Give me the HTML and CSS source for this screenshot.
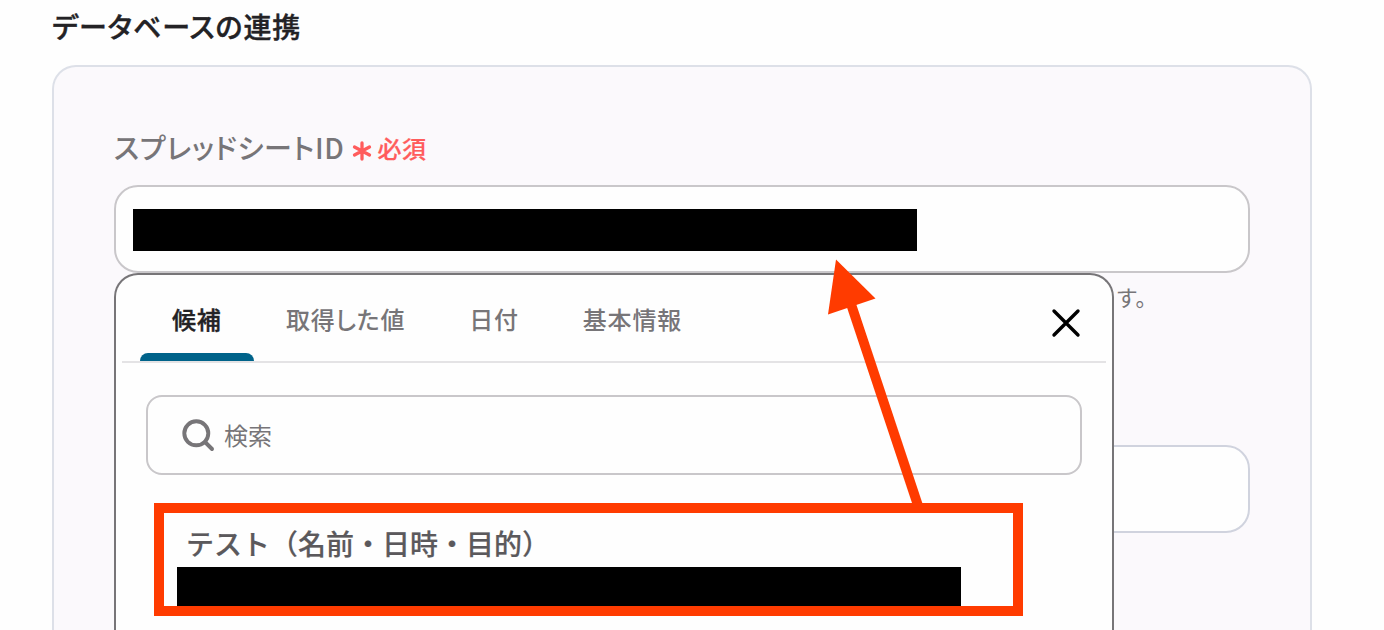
FILE: index.html
```html
<!DOCTYPE html>
<html lang="ja">
<head>
    <meta charset="UTF-8">
    <title>データベースの連携</title>
    <link rel="stylesheet" href="styles.css">
</head>
<body>
    <h1 class="section-title">データベースの連携</h1>

    <div class="panel">
        <div class="field">
            <div class="field-label">
                <span class="label-text">スプレッドシートID</span>
                <span class="required">
                    <svg class="asterisk" viewBox="0 0 20 20">
                        <path d="M10 2v16M2.5 6l15 8M17.5 6l-15 8"/>
                    </svg>
                    <span>必須</span>
                </span>
            </div>

            <div class="input-wrap">
                <div class="input">
                    <div class="masked"></div>
                </div>

                <div class="dropdown">
                    <div class="dropdown-header">
                        <div class="tabs">
                            <div class="tab active">候補</div>
                            <div class="tab">取得した値</div>
                            <div class="tab">日付</div>
                            <div class="tab">基本情報</div>
                        </div>
                        <svg class="close" viewBox="0 0 30 30">
                            <path d="M3 3l24 24M27 3L3 27"/>
                        </svg>
                    </div>

                    <div class="search">
                        <svg class="search-icon" viewBox="0 0 34 34">
                            <circle cx="15.3" cy="15.3" r="12"/>
                            <path d="M24 24l7 7"/>
                        </svg>
                        <span class="placeholder">検索</span>
                    </div>

                    <div class="candidate">
                        <div class="candidate-name">テスト（名前・日時・目的）</div>
                        <div class="candidate-masked"></div>
                    </div>
                </div>
            </div>
            <div class="hint">す。</div>
        </div>

        <div class="input second"></div>
    </div>

    <svg class="arrow" viewBox="0 0 1384 630">
        <path d="M851 304L918.5 507"/>
        <polygon points="836,259.5 875.5,298.5 828,314.5"/>
    </svg>
</body>
</html>
```

FILE: styles.css
```css
* { box-sizing: border-box; }
body {
    margin: 0;
    padding: 0 72px 0 52px;
    height: 630px;
    position: relative;
    background: #fefefe;
    font-family: "Noto Sans CJK JP", sans-serif;
    color: #777578;
}
.section-title {
    margin: 0;
    height: 65px;
    padding-top: 6px;
    font-size: 28px;
    line-height: 40px;
    font-weight: 500;
    font-feature-settings: "palt";
    letter-spacing: 0.9px;
    color: #232225;
    -webkit-text-stroke: 0.4px #232225;
}
.panel {
    height: 565px;
    padding: 60px 60px 0;
    border: 2px solid #dde0e8;
    border-bottom: none;
    border-radius: 24px 24px 0 0;
    background: #fbf9fc;
}
.field { height: 318px; }
.field-label {
    display: flex;
    align-items: center;
    gap: 7px;
    height: 58px;
    padding-bottom: 19px;
}
.label-text {
    font-size: 28px;
    line-height: 40px;
    font-weight: 500;
    font-feature-settings: "palt";
    letter-spacing: 0.75px;
}
.required {
    display: flex;
    align-items: center;
    gap: 6px;
    padding-top: 3px;
    font-size: 24px;
    line-height: 36px;
    font-weight: 500;
    letter-spacing: 0.5px;
    color: #ff5c5c;
    -webkit-text-stroke: 0.2px #ff5c5c;
}
.asterisk {
    width: 20px;
    height: 20px;
    margin-top: 5px;
    fill: none;
    stroke: #ff5c5c;
    stroke-width: 3.3;
    stroke-linecap: round;
}
.input-wrap { position: relative; }
.input {
    display: flex;
    align-items: center;
    height: 88px;
    padding: 0 17px;
    border: 2px solid #c9c7ca;
    border-radius: 24px;
    background: #fefefe;
}
.input.second { border-color: #d0d3de; }
.masked {
    width: 784px;
    height: 42px;
    margin-top: 2px;
    background: #000;
}
.hint {
    margin-left: 1003px;
    padding-top: 8px;
    font-size: 22px;
    line-height: 30px;
    font-feature-settings: "palt";
    letter-spacing: 0.5px;
}
.dropdown {
    position: absolute;
    top: 88px;
    left: 0;
    width: 1000px;
    height: 357px;
    padding: 0 6px;
    border: 2px solid #777578;
    border-bottom: none;
    border-radius: 24px 24px 0 0;
    background: #fefefe;
}
.dropdown-header {
    display: flex;
    justify-content: space-between;
    height: 88px;
    padding: 0 25px 0 18px;
    border-bottom: 2px solid #e4e3e5;
}
.tabs { display: flex; }
.tab {
    height: 86px;
    padding: 26px 32px 0;
    font-size: 24px;
    line-height: 36px;
    font-weight: 500;
    font-feature-settings: "palt";
    letter-spacing: 0.8px;
}
.tab.active {
    display: flex;
    flex-direction: column;
    width: 114px;
    color: #232225;
    -webkit-text-stroke: 0.4px #232225;
}
.tab.active::after {
    content: "";
    height: 8px;
    margin: auto -32px 0;
    border-radius: 8px 8px 0 0;
    background: #00638a;
}
.close {
    width: 30px;
    height: 30px;
    margin-top: 33px;
    fill: none;
    stroke: #000;
    stroke-width: 3.4;
    stroke-linecap: round;
}
.search {
    display: flex;
    align-items: center;
    gap: 9px;
    height: 80px;
    margin: 32px 24px 0;
    padding-left: 33px;
    border: 2px solid #c9c7ca;
    border-radius: 16px;
    font-size: 24px;
}
.placeholder { margin-top: -2px; }
.search-icon {
    width: 34px;
    height: 34px;
    fill: none;
    stroke: #777578;
    stroke-width: 3.9;
    stroke-linecap: round;
}
.candidate {
    width: 869px;
    height: 113px;
    margin: 28px 0 0 32px;
    padding: 10px 13px 0;
    border: 10px solid #ff3b00;
}
.candidate-name {
    height: 44px;
    padding-left: 9px;
    font-size: 28px;
    line-height: 40px;
    font-weight: 500;
    color: #5b595c;
    -webkit-text-stroke: 0.2px #5b595c;
}
.candidate-masked {
    width: 784px;
    height: 39px;
    background: #000;
}
.arrow {
    position: absolute;
    top: 0;
    left: 0;
    width: 1384px;
    height: 630px;
    fill: #ff3b00;
}
.arrow path {
    stroke: #ff3b00;
    stroke-width: 9.8;
}
```
